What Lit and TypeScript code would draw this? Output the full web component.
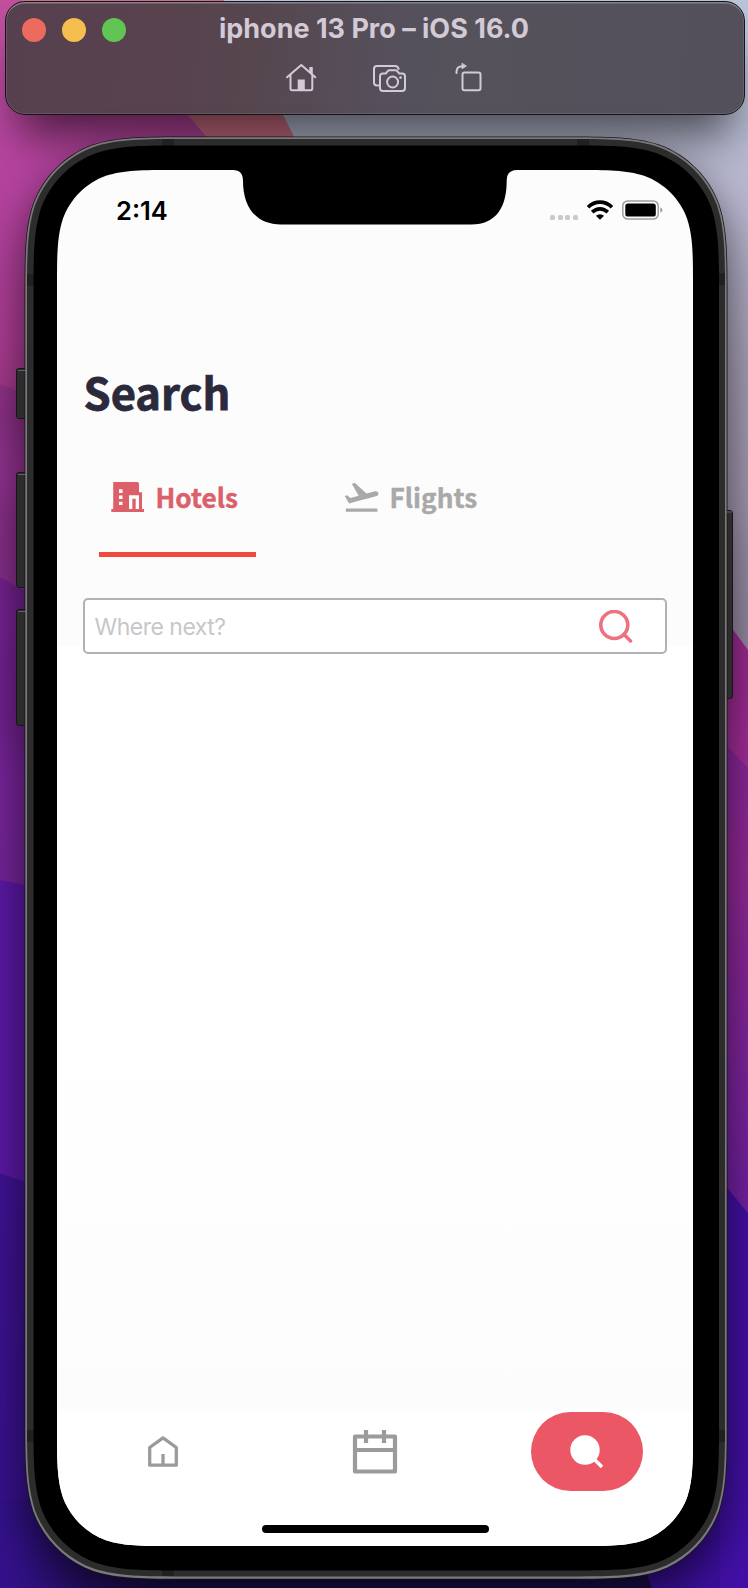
import { LitElement, html, css, svg, unsafeCSS } from "lit";
import { customElement, state } from "lit/decorators.js";

/** Rounded rectangle with continuous-curvature corners. */
function squircle(x: number, y: number, w: number, h: number, r: number): string {
  const a = 1.52866 * r, b = 1.08849 * r, c = 0.86841 * r;
  const d = 0.63149 * r, e = 0.07491 * r, f = 0.37282 * r, g = 0.16906 * r;
  const R = x + w, B = y + h;
  const p = (...n: number[]) => n.map((v) => v.toFixed(2)).join(" ");
  return (
    `M${p(x + a, y)}L${p(R - a, y)}` +
    `C${p(R - b, y, R - c, y, R - d, y + e)}C${p(R - f, y + g, R - g, y + f, R - e, y + d)}C${p(R, y + c, R, y + b, R, y + a)}` +
    `L${p(R, B - a)}` +
    `C${p(R, B - b, R, B - c, R - e, B - d)}C${p(R - g, B - f, R - f, B - g, R - d, B - e)}C${p(R - c, B, R - b, B, R - a, B)}` +
    `L${p(x + a, B)}` +
    `C${p(x + b, B, x + c, B, x + d, B - e)}C${p(x + f, B - g, x + g, B - f, x + e, B - d)}C${p(x, B - c, x, B - b, x, B - a)}` +
    `L${p(x, y + a)}` +
    `C${p(x, y + b, x, y + c, x + e, y + d)}C${p(x + g, y + f, x + f, y + g, x + d, y + e)}C${p(x + c, y, x + b, y, x + a, y)}Z`
  );
}

@customElement("desktop-wallpaper")
class DesktopWallpaper extends LitElement {
  static styles = css`
    :host { display: block; }
    svg { display: block; width: 748px; height: 1588px; }
  `;
  render() {
    return html`<svg viewBox="0 0 748 1588">
      <defs>
        <linearGradient id="l1" x2="0" y2="1"><stop offset="0" stop-color="#c0509c"/><stop offset=".4" stop-color="#b543a0"/><stop offset="1" stop-color="#a5388a"/></linearGradient>
        <linearGradient id="l2" x2="0" y2="1"><stop offset="0" stop-color="#95338e"/><stop offset="1" stop-color="#8c3092"/></linearGradient>
        <linearGradient id="l3" x2="0" y2="1"><stop offset="0" stop-color="#7a2396"/><stop offset="1" stop-color="#74249a"/></linearGradient>
        <linearGradient id="l5" x2="0" y2="1"><stop offset="0" stop-color="#401294"/><stop offset="1" stop-color="#34118c"/></linearGradient>
        <linearGradient id="r1" x2="0" y2="1"><stop offset="0" stop-color="#b8c4d8"/><stop offset=".3" stop-color="#b8b6ce"/><stop offset=".55" stop-color="#a79fb6"/><stop offset="1" stop-color="#9a8ca6"/></linearGradient>
        <linearGradient id="r3" x2="0" y2="1"><stop offset="0" stop-color="#85259a"/><stop offset=".3" stop-color="#922996"/><stop offset="1" stop-color="#7020a4"/></linearGradient>
        <linearGradient id="b1" x1="0" x2="1"><stop offset="0" stop-color="#1d0f50" stop-opacity="0"/><stop offset=".25" stop-color="#1d0f50"/></linearGradient>
      </defs>
      <rect width="400" height="440" fill="url(#l1)"/>
      <path d="M0 384L60 407V620H0z" fill="url(#l2)"/>
      <path d="M0 577L60 610V900H0z" fill="url(#l3)"/>
      <path d="M0 880L60 892V1220H0z" fill="#5a18a4"/>
      <path d="M0 1173L60 1195V1588H0z" fill="url(#l5)"/>
      <path d="M20 0H240L310 160H226L150 70z" fill="#cd6f84"/>
      <path d="M224 0H748V680H400L300 148z" fill="url(#r1)"/>
      <path d="M700 585L748 650V780H700z" fill="#a22c98"/>
      <path d="M700 718L748 768V1220H700z" fill="url(#r3)"/>
      <path d="M700 1155L748 1213V1588H700z" fill="#4210a6"/>
      <path d="M0 1500H660V1588H0z" fill="#34118c"/>
      <path d="M0 1500H620L670 1588H0z" fill="url(#b1)"/>
      <path d="M620 1500H720V1588H652z" fill="#3d0fa0"/>
    </svg>`;
  }
}

@customElement("simulator-bar")
class SimulatorBar extends LitElement {
  static styles = css`
    :host {
      display: flex; flex-direction: column; box-sizing: border-box;
      height: 114px; border: 1px solid #17131a; border-radius: 20px;
      background: linear-gradient(97deg, #57404e 0%, #57424e 22%, #56464e 33%, #55505c 52%, #55525c 60%, #54505b 100%);
      box-shadow: inset 0 1.5px 0 #86818a, inset 0 0 0 1px rgba(255,255,255,.1), 0 34px 44px -14px rgba(0,0,0,.6);
      font-family: Inter, "Liberation Sans", sans-serif;
      color: #d3cad6;
    }
    .head { display: grid; grid-template-columns: 200px 1fr 200px; align-items: center; height: 55px; }
    .lights { display: flex; gap: 16px; padding-left: 16px; }
    .light { width: 24px; height: 24px; border-radius: 50%; }
    .close { background: #ed6a5e; }
    .min { background: #f5bf4f; }
    .max { background: #61c554; }
    .title { margin: -2px 0 0 -2px; text-align: center; font-weight: 700; font-size: 27px; line-height: 32px; white-space: nowrap; }
    .tools { display: flex; padding-left: 278px; gap: 55px; margin-top: 3px; }
    .rotate { margin-left: -5.500px; }
    svg { display: block; overflow: visible; fill: none; stroke: currentColor; stroke-width: 2; stroke-linecap: round; stroke-linejoin: round; }
  `;
  render() {
    return html`
      <div class="head">
        <div class="lights"><span class="light close"></span><span class="light min"></span><span class="light max"></span></div>
        <div class="title">iphone 13 Pro – iOS 16.0</div>
      </div>
      <div class="tools">
        <svg width="34" height="34" viewBox="284 60 34 34">
          <path d="M287 77.3L301.3 65L315.300 77.300M290.500 75V88.500Q290.500 90.300 292.300 90.300H310.500Q312.300 90.300 312.300 88.500V75"/>
          <path d="M297.700 79.500H304.800V90H297.700z" fill="currentColor" stroke="none"/>
          <path d="M309.300 67H312.800V75.500L309.300 72.500z" fill="currentColor" stroke="none"/>
        </svg>
        <svg width="34" height="34" viewBox="373 60 34 34">
          <path d="M379.500 85.500H377Q374 85.500 374 82.500V69Q374 66 377 66H395Q398 66 398.600 69"/>
          <path d="M383 73.500H385.700L388 70.800Q388.600 70.200 389.500 70.200H395.500Q396.400 70.200 397 70.800L399.300 73.500H402Q405 73.500 405 76.500V88Q405 91 402 91H383Q380 91 380 88V76.500Q380 73.500 383 73.500z"/>
          <circle cx="392.600" cy="82" r="5.500"/><circle cx="400.500" cy="77.600" r="1.300" fill="currentColor" stroke="none"/>
        </svg>
        <svg class="rotate" width="34" height="34" viewBox="456.500 60 34 34">
          <rect x="462" y="72.500" width="18" height="17.700" rx="2"/>
          <path d="M456 73V71.500Q456.300 66.200 462 66.200"/>
          <path d="M461.500 63.700V68.700L465.500 66.200z" fill="currentColor" stroke-width="1"/>
        </svg>
      </div>`;
  }
}

@customElement("status-bar")
class StatusBar extends LitElement {
  static styles = css`
    :host { display: flex; justify-content: space-between; align-items: center; height: 34px; padding: 23px 30px 1px 59px; }
    .time { font: 600 25.500px/30px Inter, sans-serif; color: #000; padding-top: 1px; }
    .right { display: flex; align-items: center; gap: 9px; }
    .dots { display: flex; gap: 2.700px; padding-top: 14px; }
    .dot { width: 5px; height: 5px; border-radius: 1.500px; background: #cbcbcb; }
    svg { display: block; }
  `;
  render() {
    return html`
      <div class="time">2:14</div>
      <div class="right">
        <div class="dots">${[0, 1, 2, 3].map(() => html`<span class="dot"></span>`)}</div>
        <svg width="26" height="20" viewBox="0 0 26 20">
          <g fill="none" stroke="#000" stroke-width="3.700">
            <path d="M1 7.300Q6.200 2.200 13 2.200T25 7.300"/><path d="M5.200 12.200Q8.700 8.900 13 8.900T20.800 12.200"/>
          </g>
          <path d="M8.900 15.800Q13 12.500 17.100 15.800L13 19.700z"/>
        </svg>
        <svg width="41" height="20" viewBox="0 0 41 20">
          <rect x=".8" y=".9" width="35.400" height="18.200" rx="5" fill="none" stroke="#9d9d9d" stroke-width="1.500"/>
          <rect x="3.300" y="3.400" width="30.500" height="13.200" rx="2.700"/>
          <path d="M38.300 7.300Q40.500 8.200 40.500 10T38.300 12.700z" fill="#9d9d9d"/>
        </svg>
      </div>`;
  }
}

@customElement("search-tabs")
class SearchTabs extends LitElement {
  @state() active = 0;
  static styles = css`
    :host { display: flex; gap: 77px; padding: 0 42px; }
    .tab { display: flex; flex-direction: column; justify-content: space-between; width: 157px; height: 80px; color: #a9a9a9; }
    .on { color: #db6069; }
    .label { display: flex; align-items: center; gap: 11.500px; height: 40px; padding-left: 11px; font: 700 26.200px/40px "Noto Sans CJK JP", "Noto Sans CJK SC", sans-serif; -webkit-text-stroke: .4px currentColor; white-space: nowrap; }
    .line { height: 5.500px; background: transparent; }
    .on .line { background: #ef4b3c; }
    svg { display: block; flex: none; overflow: visible; }
  `;
  private hotel = svg`<g fill="currentColor"><path fill-rule="evenodd" d="M3.200 0H27.200Q29 0 29 1.800V10.300H32V27H34V30H1.300V27H3.200zM9 7.300V11H12.500V7.300zM9 13.600V17H12.500V13.600zM9 19.700V23H12.500V19.700zM19 13.300V27H22.300V16.700H25.700V27H29V13.300z"/></g>`;
  private flight = svg`<g transform="translate(-2.300 -5) scale(1.660)" fill="currentColor"><path d="M2.500 19h19v2h-19zM22.070 9.640c-.21-.8-1.040-1.280-1.840-1.060L14.920 10l-6.900-6.430-1.930.510 4.140 7.170-4.970 1.330-1.970-1.540-1.450.390 1.820 3.160.77 1.330 1.600-.430 5.310-1.420 4.350-1.160L21 11.490c.81-.23 1.280-1.050 1.070-1.850z"/></g>`;
  render() {
    return html`${[["Hotels", this.hotel], ["Flights", this.flight]].map(
      ([name, icon], i) => html`<div class="tab ${i === this.active ? "on" : ""}" @click=${() => (this.active = i)}>
        <div class="label"><svg width="34" height="30" viewBox="0 0 34 30">${icon}</svg><span>${name}</span></div>
        <div class="line"></div>
      </div>`
    )}`;
  }
}

@customElement("tab-bar")
class TabBar extends LitElement {
  static styles = css`
    :host { display: flex; flex-direction: column; height: 135.500px; background: #fff; }
    .row { display: grid; grid-template-columns: 1fr 1fr 1fr; height: 82px; align-items: center; justify-items: center; }
    .item { display: flex; color: #9b9b9b; }
    .pill { display: flex; align-items: center; justify-content: center; width: 112px; height: 79px; border-radius: 40px; background: #ec5766; }
    .indicator { width: 227px; height: 8.500px; border-radius: 5px; background: #000; margin: 32px auto 0; }
    svg { display: block; overflow: visible; }
  `;
  render() {
    return html`
      <div class="row">
        <div class="item"><svg width="30" height="31" viewBox="0 0 30 31" fill="none" stroke="currentColor" stroke-width="3.300" stroke-linejoin="round">
          <path d="M1.700 11.500L15 1.900L28.300 11.500V29.200H1.700zM15 18V29"/></svg></div>
        <div class="item"><svg width="44" height="44" viewBox="0 0 44 44" fill="none" stroke="currentColor" stroke-width="4.200" stroke-linejoin="round">
          <path d="M2 6.500H42V41.500H2zM2 20H42M13 0V13M31 0V13"/></svg></div>
        <div class="pill"><svg width="34" height="34" viewBox="0 0 34 34">
          <circle cx="15" cy="15" r="14.700" fill="#fff"/><path d="M24 24L32 32" stroke="#fff" stroke-width="3.500"/></svg></div>
      </div>
      <div class="indicator"></div>`;
  }
}

const FRAME = squircle(-0.5, -0.5, 703, 1443, 108);
const SCREEN_CLIP = squircle(0, 0, 636, 1376, 77.500);

@customElement("phone-device")
class PhoneDevice extends LitElement {
  static styles = css`
    :host { display: block; position: relative; width: 703px; height: 1443px; }
    .frame { position: absolute; left: 0; top: 0; overflow: visible; }
    .cast { filter: drop-shadow(0 20px 22px rgba(0,0,0,.6)); }
    .inner { position: relative; box-sizing: border-box; height: 1443px; padding: 33px 35px 34px 32px; }
    .screen { display: flex; flex-direction: column; height: 1376px; background: #fcfcfc; clip-path: path("${unsafeCSS(SCREEN_CLIP)}"); }
    .notch { position: absolute; left: 208px; top: 33px; }
    h1 { margin: 134px 0 0 26.500px; font: 700 43.500px/60px "Noto Sans CJK JP", "Noto Sans CJK SC", sans-serif; -webkit-text-stroke: .8px currentColor; color: #2a2a3c; }
    search-tabs { margin-top: 55px; }
    .results { flex: 1; margin-top: -8px; background: linear-gradient(#fff 0%, #fff 50%, #fcfcfc 100%); }
    .field { position: relative; display: flex; align-items: center; justify-content: space-between; box-sizing: border-box; height: 56px; margin: 41px 26px 0; padding: 0 32.500px 0 9.500px; border: 2px solid #b1b1b1; border-radius: 5px; background: #fff; font: 400 23px/30px Inter, sans-serif; letter-spacing: -.5px; color: #c7c7c9; }
    .field span, .field svg { margin-top: 1px; }
    .field svg { display: block; }
  `;
  render() {
    return html`
      <svg class="frame" width="703" height="1443" viewBox="0 0 703 1443">
        <g class="cast">
          <g fill="#2d2c2d" stroke="#1a141c" stroke-width="1">
            <rect x="-8.500" y="231.500" width="14" height="50" rx="2.500"/><rect x="-8.500" y="335.500" width="14" height="115" rx="2.500"/><rect x="-8.500" y="472.500" width="14" height="116" rx="2.500"/>
            <rect x="697" y="373.500" width="10.500" height="188" rx="2.500"/>
          </g>
          <path d="${FRAME}" fill="#161418"/>
        </g>
        <path d="M-7 233.500H1M-7 337.500H1M-7 474.500H1M702 375H707" stroke="#646264"/>
        <path d="${squircle(0.3, 0.3, 701.4, 1441.500, 107)}" fill="#7a797b"/>
        <path d="${squircle(2, 2, 698, 1437.500, 105.500)}" fill="#2d2c2d"/>
        <path d="M137 2h12v7h-12zM552 2h12v7h-12zM2 137h7v12h-7zM693 136h7v12h-7zM2 1293h7v12h-7zM693 1293h7v12h-7zM137 1432h12v7h-12z" fill="#202020"/>
        <path d="${squircle(8.500, 8.500, 685.500, 1425, 99.500)}" fill="#000"/>
      </svg>
      <div class="inner">
        <div class="screen">
          <status-bar></status-bar>
          <h1>Search</h1>
          <search-tabs></search-tabs>
          <div class="field">
            <span>Where next?</span>
            <svg width="34" height="33" viewBox="0 0 34 33" fill="none" stroke="#ef7180" stroke-width="3.600"><circle cx="15.300" cy="15" r="13.500"/><path d="M24.800 24.300L31.500 31" stroke-linecap="round" stroke-width="3.500"/></svg>
          </div>
          <div class="results"></div>
          <tab-bar></tab-bar>
        </div>
      </div>
      <svg class="notch" width="286" height="56" viewBox="0 0 286 56"><path d="M0 -1V0Q10 0 10 11C10 36 22 54.500 48 54.500H238C264 54.500 273.700 36 273.700 11Q273.700 0 284 0V-1z"/></svg>`;
  }
}

@customElement("app-root")
class AppRoot extends LitElement {
  static styles = css`
    :host { display: block; position: relative; width: 748px; height: 1588px; overflow: hidden; background: #4a148c; }
    .wall { position: absolute; left: 0; top: 0; }
    .stage { position: relative; display: flex; flex-direction: column; }
    simulator-bar { margin: 1px 3px 0 5px; }
    phone-device { margin: 22px 0 0 25px; }
  `;
  render() {
    return html`<desktop-wallpaper class="wall"></desktop-wallpaper>
      <div class="stage"><simulator-bar></simulator-bar><phone-device></phone-device></div>`;
  }
}
